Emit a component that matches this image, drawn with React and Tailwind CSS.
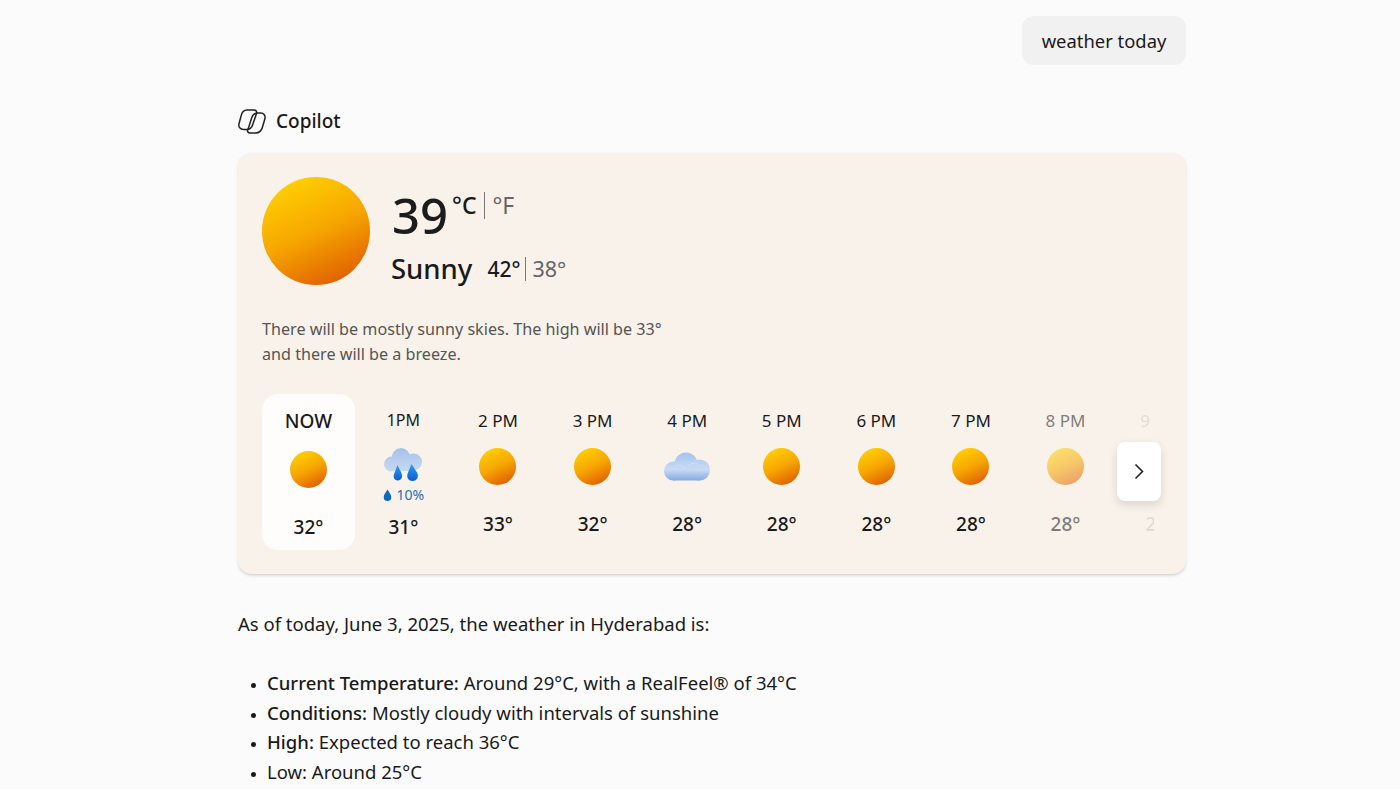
const HOURS = [
  { label: 'NOW', temp: '32°', icon: 'sun', now: true },
  { label: '1PM', temp: '31°', icon: 'rain', chance: '10%' },
  { label: '2 PM', temp: '33°', icon: 'sun' },
  { label: '3 PM', temp: '32°', icon: 'sun' },
  { label: '4 PM', temp: '28°', icon: 'cloud' },
  { label: '5 PM', temp: '28°', icon: 'sun' },
  { label: '6 PM', temp: '28°', icon: 'sun' },
  { label: '7 PM', temp: '28°', icon: 'sun' },
  { label: '8 PM', temp: '28°', icon: 'sun', fade: 'opacity-55' },
  { label: '9 PM', temp: '28°', icon: 'sun', fade: 'opacity-10' },
];

const CopilotLogo = () => (
  <svg width="28" height="25" viewBox="0 0 28 25" fill="none" stroke="#222" strokeWidth="1.5" strokeLinejoin="round" strokeLinecap="round">
    <path d="M9 1h7c2 0 3.100 1.600 2.500 3.500L14.600 16c-1 3-3 4.600-5.800 4.600H5.500C2.200 20.600.2 17.800 1 14.800L3.200 6.500C4 3 6 1 9 1z" />
    <path d="M18.600 4h4.200c3 0 4.900 2.700 4.100 5.700L24.500 18c-1 3.800-3.500 6-7 6H12c-1.800 0-3-1.600-2.500-3.400" />
    <path d="M18.400 4.200C15.800 4.500 14.600 6 13.800 8.500L10 20.400" />
  </svg>
);

const SunBall = ({ className }) => (
  <div className={`rounded-full bg-[linear-gradient(155deg,#ffd400_6%,#f7a600_50%,#dc5500_96%)] ${className}`} />
);

const CloudIcon = () => (
  <svg width="46" height="29" viewBox="0 0 46 29" className="overflow-visible">
    <defs>
      <linearGradient id="cloudFill" gradientUnits="userSpaceOnUse" x1="0" y1="0" x2="0" y2="29">
        <stop offset="0" stopColor="#a3c2ef" />
        <stop offset="0.6" stopColor="#c9dbf3" />
        <stop offset="1" stopColor="#7ea8e6" />
      </linearGradient>
    </defs>
    <g fill="url(#cloudFill)">
      <circle cx="22" cy="12" r="11.500" />
      <circle cx="9.500" cy="19" r="9.500" />
      <circle cx="35.500" cy="18" r="10.500" />
      <rect x="9" y="16" width="27" height="12.500" />
    </g>
    <path d="M11 14c3-1.500 7-1 9 2M24 14c2.500-3 7-3.500 10-2" fill="none" stroke="#dbe7f7" strokeWidth="1" strokeOpacity="0.6" />
  </svg>
);

const RainIcon = () => (
  <svg width="38" height="34" viewBox="0 0 38 34" className="overflow-visible">
    <defs>
      <linearGradient id="rainCloud" gradientUnits="userSpaceOnUse" x1="0" y1="0" x2="0" y2="26">
        <stop offset="0" stopColor="#a5c1ea" />
        <stop offset="1" stopColor="#cbdcf2" />
      </linearGradient>
      <linearGradient id="rainDrop" x1="0" y1="0" x2="0" y2="1">
        <stop offset="0" stopColor="#2f9df2" />
        <stop offset="1" stopColor="#0b5fd0" />
      </linearGradient>
    </defs>
    <g fill="url(#rainCloud)">
      <circle cx="17" cy="9" r="9" />
      <circle cx="7.500" cy="16" r="7.500" />
      <circle cx="29.500" cy="14" r="8.500" />
      <rect x="7" y="12" width="23" height="11" />
    </g>
    <path d="M10.500 17l3.800 7.800c1.900 4 .2 7.700-3.400 7.700-3.700 0-5.300-3.700-3.400-7.500z" fill="url(#rainDrop)" transform="translate(3 0)" />
    <path d="M22.500 16l5.500 8.500c2.200 4 .2 8.500-4.500 8.500s-6.200-4.300-4.700-8z" fill="url(#rainDrop)" transform="translate(5 0)" />
  </svg>
);

const HourColumn = ({ hour }) => {
  if (hour.now) {
    return (
      <div className="w-[93px] h-[156px] mr-[1.1px] shrink-0 flex flex-col items-center bg-[#fffdfb] rounded-2xl">
        <div className="mt-[13px] h-[28px] text-[19px] leading-[28px] font-medium text-[#1a1a1a]">{hour.label}</div>
        <SunBall className="mt-[16px] w-[37px] h-[37px]" />
        <div className="mt-[26px] text-[19px] leading-[26px] font-medium text-[#1a1a1a]">{hour.temp}</div>
      </div>
    );
  }
  return (
    <div className={`w-[94.6px] h-[156px] shrink-0 flex flex-col items-center ${hour.fade || ''}`}>
      {hour.chance ? (
        <>
          <div className="mt-[14px] h-[24px] text-[16px] leading-[24px] text-[#1a1a1a]">{hour.label}</div>
          <div className="h-[38px] mt-[14px] flex items-center justify-center">
            <RainIcon />
          </div>
          <div className="mt-[3px] h-[16px] flex items-center gap-[5px] text-[14px] leading-[16px] text-[#1f6fb2]">
            <svg width="9" height="13" viewBox="0 0 8 12"><path d="M4 .5c1.500 2.500 3.500 4.700 3.500 7a3.500 3.500 0 0 1-7 0C.5 5.200 2.500 3 4 .5z" fill="#0f6cbd" /></svg>
            {hour.chance}
          </div>
          <div className="mt-[11px] text-[19px] leading-[26px] font-medium text-[#1a1a1a]">{hour.temp}</div>
        </>
      ) : (
        <>
          <div className="mt-[15px] h-[24px] text-[17px] leading-[24px] text-[#1a1a1a]">{hour.label}</div>
          <div className="h-[38px] mt-[14px] flex items-center justify-center">
            {hour.icon === 'sun' ? <SunBall className="w-[37px] h-[37px]" /> : <CloudIcon />}
          </div>
          <div className="mt-[26px] text-[19px] leading-[26px] font-medium text-[#1a1a1a]">{hour.temp}</div>
        </>
      )}
    </div>
  );
};

export default function App() {
  return (
    <div className="h-[789px] overflow-hidden bg-[#fbfbfb] font-['Noto_Sans','Open_Sans',sans-serif] text-[#1a1a1a]">
      <div className="w-[948px] ml-[238px] pt-[16px]">
        <div className="flex justify-end">
          <div className="h-[49px] w-[164px] pt-px flex items-center justify-center rounded-xl bg-[#f1f1f1] text-[18.400px]">weather today</div>
        </div>

        <div className="mt-[43px] h-[26px] flex items-center gap-[10px]">
          <CopilotLogo />
          <span className="text-[19px] font-medium">Copilot</span>
        </div>

        <div className="mt-[19px] h-[422px] rounded-[14px] bg-[#f9f2ea] border-b border-[#dcdad7] shadow-[0_1px_3px_rgba(0,0,0,0.12)] px-[24px] pt-[24px]">
          <div className="flex gap-[21px]">
            <SunBall className="w-[108px] h-[108px]" />
            <div>
              <div className="flex items-start h-[72px]">
                <span className="text-[49px] leading-[72px] mt-[2px] font-medium ml-px text-[#1c1c1c]">39</span>
                <span className="text-[23px] leading-[32px] mt-[12px] ml-[4px] font-medium">°C</span>
                <span className="w-px h-[27px] bg-[#777] mt-[15px] ml-[7px]" />
                <span className="text-[23px] leading-[32px] mt-[12px] ml-[8px] text-[#666]">°F</span>
              </div>
              <div className="flex items-center h-[34px] mt-[3px]">
                <span className="text-[27.500px] leading-[34px] font-medium">Sunny</span>
                <span className="ml-[15px] text-[21px] leading-[34px] font-medium">42°</span>
                <span className="w-px h-[24px] bg-[#777] ml-[5px]" />
                <span className="ml-[6px] text-[21.500px] leading-[34px] text-[#666]">38°</span>
              </div>
            </div>
          </div>

          <p className="mt-[31px] w-[420px] text-[16.150px] leading-[25px] text-[#555]">
            There will be mostly sunny skies. The high will be 33° and there will be a breeze.
          </p>

          <div className="relative mt-[27px] w-[899px]">
            <div className="flex overflow-hidden w-[892px]">
              {HOURS.map((h) => (
                <HourColumn key={h.label} hour={h} />
              ))}
            </div>
            <button className="absolute right-0 top-[48px] w-[44px] h-[59px] rounded-lg bg-white shadow-[0_4px_10px_rgba(0,0,0,0.12)] flex items-center justify-center">
              <svg width="10" height="17" viewBox="0 0 10 17" fill="none" stroke="#222" strokeWidth="1.600">
                <path d="M1.500 1.500L8.500 8.500L1.500 15.500" />
              </svg>
            </button>
          </div>
        </div>

        <p className="mt-[34px] text-[18.500px] leading-[29.500px]">As of today, June 3, 2025, the weather in Hyderabad is:</p>

        <ul className="mt-[29.500px] pl-[29px] list-disc marker:text-[13px] text-[18.500px] leading-[29.500px]">
          <li><strong className="font-medium">Current Temperature:</strong> Around 29°C, with a RealFeel® of 34°C</li>
          <li><strong className="font-medium">Conditions:</strong> Mostly cloudy with intervals of sunshine</li>
          <li><strong className="font-medium">High:</strong> Expected to reach 36°C</li>
          <li>Low: Around 25°C</li>
        </ul>
      </div>
    </div>
  );
}
